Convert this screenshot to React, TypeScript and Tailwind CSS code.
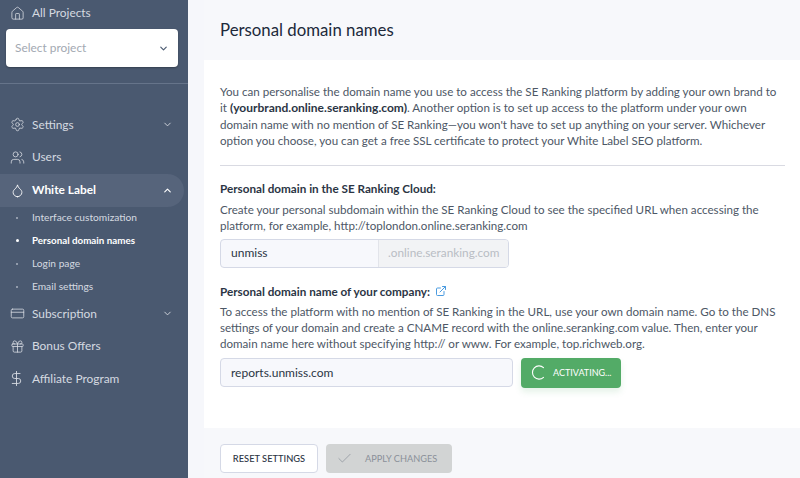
import { ChevronDown, ChevronUp, CreditCard, DollarSign, Droplet, ExternalLink, Gift, House, Settings, Users, Check } from 'lucide-react';

const subItems = [
  { label: 'Interface customization', active: false },
  { label: 'Personal domain names', active: true },
  { label: 'Login page', active: false },
  { label: 'Email settings', active: false },
];

function NavRow({ icon, label, chevron }: { icon: React.ReactNode; label: string; chevron?: boolean }) {
  return (
    <div className="flex h-[32.5px] items-center pl-[10px] pr-[15px] text-[#d5d9e0]">
      <span className="flex w-[22px] justify-start">{icon}</span>
      <span className="text-[11.9px]">{label}</span>
      {chevron && <ChevronDown size={11} className="ml-auto" />}
    </div>
  );
}

function Sidebar() {
  return (
    <aside className="flex h-[478px] w-[188px] shrink-0 flex-col bg-[#4a5970]">
      <div className="flex h-[29px] items-center pl-[10px] pb-[3px] text-[#d5d9e0]">
        <span className="w-[22px]"><House size={15} strokeWidth={1.3} /></span>
        <span className="text-[11.9px]">All Projects</span>
      </div>
      <div className="mx-[6px] flex h-[38px] w-[172px] items-center justify-between rounded-[4px] bg-white pl-[9px] pr-[9px] shadow-[0_1px_2px_rgba(0,0,0,0.3)]">
        <span className="text-[11.9px] text-[#a3a9b2]">Select project</span>
        <ChevronDown size={11} strokeWidth={2.5} className="text-[#4a5970]" />
      </div>
      <div className="mt-[16px] h-px bg-[#66748a]" />
      <div className="mt-[24.5px]">
        <NavRow icon={<Settings size={15} strokeWidth={1.3} />} label="Settings" chevron />
        <NavRow icon={<Users size={15} strokeWidth={1.3} />} label="Users" />
        <div className="flex h-[33px] w-[184px] items-center rounded-r-[17px] bg-[#56647b] pl-[10px] pr-[11px] text-white">
          <span className="w-[22px]"><Droplet size={15} strokeWidth={1.4} /></span>
          <span className="text-[11.9px] font-bold">White Label</span>
          <ChevronUp size={11} strokeWidth={2.5} className="ml-auto" />
        </div>
        <div className="-mt-[0.5px] flex flex-col">
          {subItems.map((item) => (
            <div key={item.label} className={`flex h-[23px] items-center pl-[16px] text-[10.2px] ${item.active ? 'font-bold text-white' : 'text-[#d5d9e0]'}`}>
              <span className={`block rounded-full ${item.active ? 'mr-[13px] h-[3px] w-[3px] bg-white' : 'mr-[14px] h-[2px] w-[2px] bg-[#aab2bf]'}`} />
              <span className={item.active ? 'text-[9.8px]' : ''}>{item.label}</span>
            </div>
          ))}
        </div>
        <div className="-mt-[0.5px]">
          <NavRow icon={<CreditCard size={15} strokeWidth={1.3} />} label="Subscription" chevron />
          <NavRow icon={<Gift size={15} strokeWidth={1.3} />} label="Bonus Offers" />
          <NavRow icon={<DollarSign size={17} strokeWidth={1.3} className="-ml-[2px]" />} label="Affiliate Program" />
        </div>
      </div>
    </aside>
  );
}

export default function App() {
  return (
    <div className="flex h-[478px] w-[800px] overflow-hidden bg-[#f6f7fb] font-['Lato','Noto_Sans',sans-serif] text-[#4d5766]">
      <Sidebar />
      <main className="ml-[16px] flex min-w-0 flex-1 flex-col">
        <header className="flex h-[60px] items-center bg-[#f7f8fb] pl-[16px]">
          <h1 className="text-[16.8px] text-[#20293a]">Personal domain names</h1>
        </header>
        <section className="h-[368px] bg-white pl-[16px] pr-[15px] pt-[24px]">
          <p className="text-[11.6px] leading-[16.3px]">
            You can personalise the domain name you use to access the SE Ranking platform by adding your own brand to it <b className="text-[12px] text-[#2b3544]">(yourbrand.online.seranking.com)</b>. Another option is to set up access to the platform under your own domain name with no mention of SE Ranking—you won't have to set up anything on your server. Whichever option you choose, you can get a free SSL certificate to protect your White Label SEO platform.
          </p>
          <div className="mt-[16px] h-px bg-[#d9dae2]" />
          <h2 className="mt-[14px] text-[11.7px] font-bold leading-[16px] text-[#2b3544]">Personal domain in the SE Ranking Cloud:</h2>
          <p className="mt-[6px] text-[11.6px] leading-[16.3px]">
            Create your personal subdomain within the SE Ranking Cloud to see the specified URL when accessing the platform, for example, http://toplondon.online.seranking.com
          </p>
          <div className="mt-[4px] flex h-[29px] w-[289px] overflow-hidden rounded-[4px] border border-[#d5d9e6] bg-[#f7f8fc] text-[11.8px]">
            <div className="flex w-[158px] items-center border-r border-[#e2e4ea] pl-[10px] text-[12px] text-[#2b3544]">unmiss</div>
            <div className="flex flex-1 items-center bg-[#f2f3f5] pl-[9px] text-[#b9bdc4]">.online.seranking.com</div>
          </div>
          <h2 className="mt-[15px] flex items-center gap-[5px] text-[11.7px] font-bold leading-[16px] text-[#2b3544]">
            Personal domain name of your company:
            <ExternalLink size={12} className="text-[#4a9be0]" />
          </h2>
          <p className="mt-[5px] text-[11.6px] leading-[16.3px]">
            To access the platform with no mention of SE Ranking in the URL, use your own domain name. Go to the DNS settings of your domain and create a CNAME record with the online.seranking.com value. Then, enter your domain name here without specifying http:// or www. For example, top.richweb.org.
          </p>
          <div className="mt-[5px] flex items-center gap-[8px]">
            <div className="flex h-[29px] w-[293px] items-center rounded-[4px] border border-[#d5d9e6] bg-[#f7f8fc] pl-[10px] text-[12px] text-[#2b3544]">reports.unmiss.com</div>
            <div className="flex h-[30px] w-[100px] items-center rounded-[4px] bg-[#53ab67] pl-[10px] text-[9px] text-white shadow-[0_4px_6px_rgba(83,171,103,0.15)]">
              <svg width="15" height="15" viewBox="0 0 15 15" fill="none" className="mr-[7px]">
                <path d="M12.5 2.6A6.6 6.6 0 1 0 12.5 12.4" stroke="white" strokeWidth="1.1" strokeLinecap="round" />
              </svg>
              ACTIVATING...
            </div>
          </div>
        </section>
        <footer className="flex h-[50px] items-start gap-[8px] bg-[#f7f8fb] pl-[16px] pt-[16px]">
          <div className="flex h-[29px] w-[98px] items-center justify-center rounded-[4px] border border-[#d5d9e6] bg-white text-[9.3px] font-medium text-[#2b3544]">RESET SETTINGS</div>
          <div className="flex h-[29px] w-[126px] items-center rounded-[4px] bg-[#d2d4d4] pl-[10px] text-[9.2px] text-[#8a9099]">
            <Check size={17} strokeWidth={1} className="mr-[12px] text-[#8a9099]" />
            APPLY CHANGES
          </div>
        </footer>
      </main>
    </div>
  );
}
